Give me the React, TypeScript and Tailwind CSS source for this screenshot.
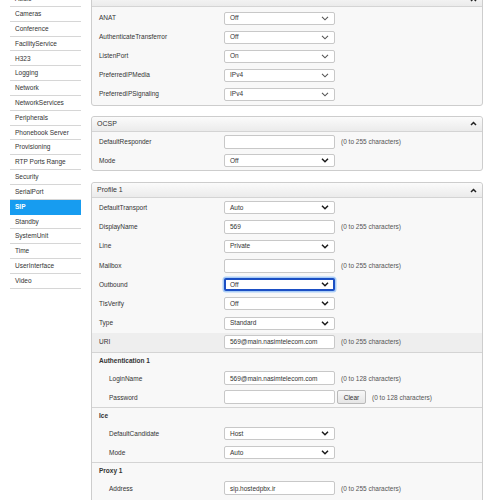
import React from 'react'

const navItems = [
    'Audio', 'Cameras', 'Conference', 'FacilityService', 'H323', 'Logging', 'Network',
    'NetworkServices', 'Peripherals', 'Phonebook Server', 'Provisioning', 'RTP Ports Range',
    'Security', 'SerialPort', 'SIP', 'Standby', 'SystemUnit', 'Time', 'UserInterface', 'Video',
]

function ChevronDown({ light }: { light?: boolean }) {
    return (
        <svg width="8" height="5" viewBox="0 0 8 5" className="shrink-0">
            <path d="M1 0.8l3 3 3-3" fill="none" stroke={light ? '#555' : '#1a1a1a'} strokeWidth={light ? 1.1 : 1.5} />
        </svg>
    )
}

function ChevronUp() {
    return (
        <svg width="7" height="5" viewBox="0 0 7 5">
            <path d="M1 4l2.5-2.5L6 4" fill="none" stroke="#222" strokeWidth="1.5" />
        </svg>
    )
}

function Select({ value, light, focused }: { value: string; light?: boolean; focused?: boolean }) {
    if (focused) {
        return (
            <div className="w-[111px] h-[13px] bg-white border-2 border-[#1b4fc4] rounded-[2px] shadow-[0_0_0_1.5px_#a9cdf7] flex items-center justify-between pl-[4px] pr-[4px]">
                <span>{value}</span>
                <ChevronDown />
            </div>
        )
    }
    return (
        <div className="w-[111px] h-[13px] bg-white border border-[#c8c8c8] rounded-[2px] flex items-center justify-between pl-[5px] pr-[5px]">
            <span>{value}</span>
            <ChevronDown light={light} />
        </div>
    )
}

function TextBox({ value }: { value?: string }) {
    return (
        <div className="w-[111px] h-[14px] bg-white border border-[#c8c8c8] rounded-[2px] flex items-center pl-[5px]">
            {value}
        </div>
    )
}

function Row({ label, indent, shaded, tall, children }: { label?: string; indent?: boolean; shaded?: boolean; tall?: boolean; children: React.ReactNode }) {
    return (
        <div className={`flex items-center pl-[7px] ${tall ? 'h-[19.2px]' : 'h-[19px]'} ${shaded ? 'bg-[#eeeeee]' : ''}`}>
            <div className={`w-[125px] shrink-0 ${indent ? 'pl-[10px]' : ''}`}>{label}</div>
            {children}
        </div>
    )
}

function Hint({ text = '(0 to 255 characters)' }: { text?: string }) {
    return <span className="ml-[6px] text-[#555]">{text}</span>
}

function Panel({ title, className, children }: { title: string; className?: string; children: React.ReactNode }) {
    return (
        <div className={`border border-[#cdcdcd] rounded-[3px] bg-[#f8f8f8] ${className ?? ''}`}>
            <div className="h-[15.3px] flex items-center justify-between px-[5px] bg-gradient-to-b from-[#fbfbfb] to-[#ebebeb] border-b border-[#d4d4d4] rounded-t-[3px] text-[7px]">
                <span>{title}</span>
                <ChevronUp />
            </div>
            {children}
        </div>
    )
}

function Group({ title, children }: { title: string; children: React.ReactNode }) {
    return (
        <div className="border-t border-[#d4d4d4]">
            <div className="h-[16px] flex items-center pl-[7px] font-bold">{title}</div>
            {children}
        </div>
    )
}

export default function App() {
    return (
        <div className="h-[500px] overflow-hidden bg-white flex font-['Liberation_Sans',Arial,sans-serif] text-[6.5px] text-[#333]">
            <div className="ml-[10px] w-[71px] -mt-[7.84px] shrink-0">
                {navItems.map((item) =>
                    item === 'SIP' ? (
                        <div key={item} className="h-[14.84px] flex items-center pl-[5px] bg-[#179cf0] text-white font-bold">
                            {item}
                        </div>
                    ) : (
                        <div key={item} className="h-[14.84px] flex items-center pl-[5px] border-b border-[#d6d6d6]">
                            {item}
                        </div>
                    )
                )}
            </div>

            <div className="ml-[10px] w-[392px] -mt-[9px] shrink-0 flex flex-col">
                <Panel title="">
                    <div className="pt-[1.5px] pb-[1px]">
                        <Row label="ANAT"><Select value="Off" light /></Row>
                        <Row label="AuthenticateTransferror"><Select value="Off" light /></Row>
                        <Row label="ListenPort"><Select value="On" light /></Row>
                        <Row label="PreferredIPMedia"><Select value="IPv4" light /></Row>
                        <Row label="PreferredIPSignaling"><Select value="IPv4" light /></Row>
                    </div>
                </Panel>

                <Panel title="OCSP" className="mt-[10px]">
                    <Row label="DefaultResponder"><TextBox /><Hint /></Row>
                    <Row label="Mode"><Select value="Off" /></Row>
                </Panel>

                <Panel title="Profile 1" className="mt-[11px]">
                    <Row label="DefaultTransport" tall><Select value="Auto" /></Row>
                    <Row label="DisplayName" tall><TextBox value="569" /><Hint /></Row>
                    <Row label="Line" tall><Select value="Private" /></Row>
                    <Row label="Mailbox" tall><TextBox /><Hint /></Row>
                    <Row label="Outbound" tall><Select value="Off" focused /></Row>
                    <Row label="TlsVerify" tall><Select value="Off" /></Row>
                    <Row label="Type" tall><Select value="Standard" /></Row>
                    <Row label="URI" tall shaded><TextBox value="569@main.nasimtelecom.com" /><Hint /></Row>

                    <Group title="Authentication 1">
                        <Row label="LoginName" indent>
                            <TextBox value="569@main.nasimtelecom.com" />
                            <Hint text="(0 to 128 characters)" />
                        </Row>
                        <Row label="Password" indent>
                            <TextBox />
                            <button className="ml-[2px] w-[29px] h-[14px] border border-[#b9b9b9] rounded-[2px] bg-gradient-to-b from-[#f8f8f8] to-[#e6e6e6] text-[#333]">
                                Clear
                            </button>
                            <Hint text="(0 to 128 characters)" />
                        </Row>
                    </Group>

                    <Group title="Ice">
                        <Row label="DefaultCandidate" indent><Select value="Host" /></Row>
                        <Row label="Mode" indent><Select value="Auto" /></Row>
                    </Group>

                    <Group title="Proxy 1">
                        <Row label="Address" indent><TextBox value="sip.hostedpbx.ir" /><Hint /></Row>
                        <Row indent><TextBox /></Row>
                    </Group>
                </Panel>
            </div>
        </div>
    )
}
